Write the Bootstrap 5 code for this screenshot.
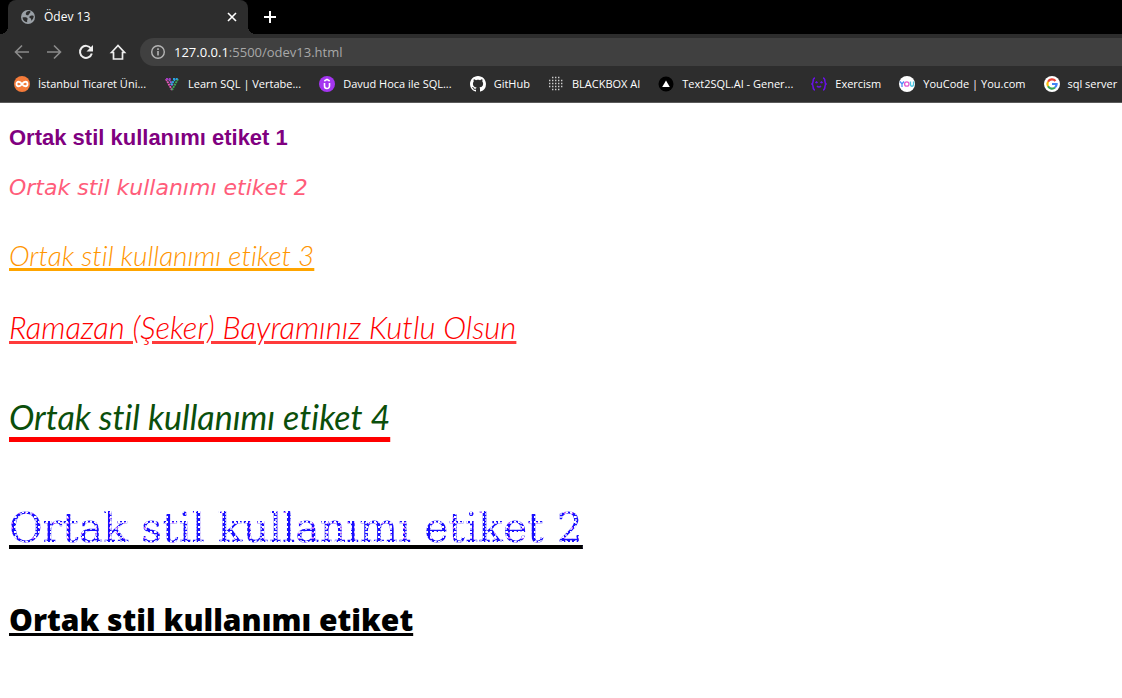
<!DOCTYPE html>
<html lang="tr">
<head>
<meta charset="utf-8">
<meta name="viewport" content="width=device-width, initial-scale=1">
<title>Ödev 13</title>
<link href="https://cdn.jsdelivr.net/npm/bootstrap@5.3.0/dist/css/bootstrap.min.css" rel="stylesheet">
<style>
  body { background: #fff; overflow-x: hidden; }
  svg { display: block; flex: none; }
  .browser { background: #2d2d2d; color: #fff; font: 12px/16px "Open Sans", sans-serif; border-bottom: 1px solid #5a5a5a; }
  .browser button { background: none; border: 0; padding: 0; color: inherit; }
  .tabs { background: #000; height: 34px; }
  .tab-current { position: relative; width: 240px; height: 34px; background: #2d2d2d; border-radius: 8px 8px 0 0; padding: 0 10px 0 12px; }
  .tab-current::before, .tab-current::after { content: ""; position: absolute; bottom: 0; width: 8px; height: 8px; }
  .tab-current::before { left: -8px; background: radial-gradient(circle at 0 0, #000 8px, #2d2d2d 8px); }
  .tab-current::after { right: -8px; background: radial-gradient(circle at 100% 0, #000 8px, #2d2d2d 8px); }
  .toolbar { height: 36px; padding-left: 12px; gap: 12px; }
  .browser .dim { color: #8b8b8b; }
  .address { height: 28px; padding-left: 10px; gap: 8px; background: #404040; border-radius: 14px 0 0 14px; font-size: 13px; color: #a8a8a8; }
  .address b { color: #fff; font-weight: 400; }
  .bookmarks { height: 32px; padding: 0 0 4px 14px; gap: 18px; overflow: hidden; }
  .bookmarks a { color: #fff; text-decoration: none; white-space: nowrap; flex: none; font-size: 11px; }
  .page-text { padding: 21px 9px; }
  .page-text > * { margin: 0; font-weight: 400; text-decoration-line: underline; font-variant-ligatures: none !important; }
  .page-text .purple-line { font: bold 22px/28px "Liberation Sans", sans-serif; color: purple; text-decoration: none; margin-bottom: 22px; }
  .page-text .pink-line { font: italic 22px/28px "DejaVu Sans", sans-serif; color: #ff5c7a; text-decoration: none; margin-bottom: 33px; }
  .page-text .orange-line { font: italic 300 28px/40px Lato, sans-serif; color: #ff9500; text-decoration-color: orange; text-decoration-thickness: 3px; text-underline-offset: 2px; margin-bottom: 32px; }
  .page-text .red-line { font: italic 300 31px/40px Lato, sans-serif; color: red; text-decoration-color: #ff3b3b; text-decoration-thickness: 3px; text-underline-offset: 2px; margin-bottom: 48px; }
  .page-text .green-line { font: italic 34px/44px Lato, sans-serif; color: #0b4f0b; text-decoration-color: red; text-decoration-thickness: 5px; text-underline-offset: 7px; margin-bottom: 61px; }
  .page-text .dotted-line { font: 41px/56px "DejaVu Serif", serif; color: transparent; background: radial-gradient(circle at 2px 2px, #fff 0 1px, transparent 1px) 0 0 / 4px 5px, radial-gradient(circle at 2px 2px, #ffffffb0 0 1px, transparent 1px) 0 0 / 5px 3px, radial-gradient(circle at 3px 3px, #c060ff 0 1px, transparent 1px) 0 0 / 7px 5px, linear-gradient(#1a10ff, #1a10ff); -webkit-background-clip: text; background-clip: text; text-decoration-color: #000; text-decoration-thickness: 4px; text-underline-offset: 3px; margin-bottom: 42px; }
  .page-text .black-line { font: 800 30px/44px "Open Sans", sans-serif; color: #000; text-decoration-thickness: 3px; text-underline-offset: 2px; }
</style>
</head>
<body>
<header class="browser">
  <div class="tabs d-flex ps-2">
    <div class="tab-current d-flex align-items-center">
      <svg width="16" height="16" viewBox="0 0 16 16"><circle cx="8" cy="8" r="7" fill="#9aa0a6"/><path d="M2.500 8.500c2-.6 4.500-.5 5 .8s-.8 1.700-.3 4C4.500 13 2.700 11 2.500 8.500zM6.500 3c1-1 3-1.200 4-.4.200 1.400-1 1.600-1.500 2.400S8.600 6.500 7 6.300 5.500 4 6.500 3zM9.500 7.500c1-1 2.500-1.200 4.200-.4 0 2-1 3.800-2.400 4.700-.3-1.300.2-2-.8-2.500S9 8.200 9.500 7.500z" fill="#2d2d2d"/></svg>
      <span class="ms-2 flex-grow-1">Ödev 13</span>
      <button type="button" aria-label="Kapat"><svg width="12" height="12" viewBox="0 0 12 12"><path d="M2 2l8 8M10 2l-8 8" stroke="#fff" stroke-width="1.600"/></svg></button>
    </div>
    <button type="button" class="ms-3" aria-label="Yeni sekme"><svg width="12" height="12" viewBox="0 0 12 12"><path d="M6 0v12M0 6h12" stroke="#fff" stroke-width="2"/></svg></button>
  </div>
  <div class="toolbar d-flex align-items-center">
    <button type="button" class="dim" aria-label="Geri"><svg width="20" height="20" viewBox="0 0 20 20" fill="none" stroke="currentColor" stroke-width="1.600"><path d="M17 10H4M10 3.500L3.500 10l6.500 6.500"/></svg></button>
    <button type="button" class="dim" aria-label="İleri"><svg width="20" height="20" viewBox="0 0 20 20" fill="none" stroke="currentColor" stroke-width="1.600"><path d="M3 10h13M10 3.500l6.500 6.500-6.500 6.500"/></svg></button>
    <button type="button" aria-label="Yenile"><svg width="20" height="20" viewBox="0 0 20 20"><path d="M15 6.500A6 6 0 1 0 15.800 11.500" fill="none" stroke="#eee" stroke-width="2"/><path d="M17 3v6.500h-6.500z" fill="#eee"/></svg></button>
    <button type="button" aria-label="Ana sayfa"><svg width="20" height="20" viewBox="0 0 20 20"><path d="M3.500 10.500L10 3.500l6.500 7H14.500V17h-9v-6.500z" fill="none" stroke="#eee" stroke-width="1.700"/></svg></button>
    <div class="address d-flex align-items-center flex-grow-1">
      <svg width="16" height="16" viewBox="0 0 16 16"><circle cx="8" cy="8" r="6.300" fill="none" stroke="#b5b5b5" stroke-width="1.400"/><path d="M8 7v4.500M8 4.300v1.600" stroke="#b5b5b5" stroke-width="1.600"/></svg>
      <span><b>127.0.0.1</b>:5500/odev13.html</span>
    </div>
  </div>
  <nav class="bookmarks d-flex align-items-center">
    <a href="#" class="d-flex align-items-center gap-2"><svg width="16" height="16" viewBox="0 0 16 16"><circle cx="8" cy="8" r="8" fill="#f47b3a"/><path d="M8 8C6 5 2.500 5 2.500 8S6 11 8 8s5.500-3 5.500 0S10 11 8 8z" fill="none" stroke="#fff" stroke-width="1.800"/></svg>İstanbul Ticaret Üni...</a>
    <a href="#" class="d-flex align-items-center gap-2"><svg width="16" height="16" viewBox="0 0 16 16" fill="none" stroke-width="2" stroke-dasharray="2 .7"><path d="M2 3l6 11" stroke="#e457b8"/><path d="M5 3l4 7" stroke="#9b5bd6"/><path d="M14 3L8 14" stroke="#3fa65a"/><path d="M11 3L7 9" stroke="#29b6e8"/><path d="M2 3h5" stroke="#a23cc0"/><path d="M9 3h5" stroke="#2aa0e0"/></svg>Learn SQL | Vertabe...</a>
    <a href="#" class="d-flex align-items-center gap-2"><svg width="16" height="16" viewBox="0 0 16 16"><circle cx="8" cy="8" r="8" fill="#a435f0"/><path d="M5.500 7v3a2.500 2.500 0 0 0 5 0V7M5.300 5L8 3.400 10.700 5" fill="none" stroke="#fff" stroke-width="1.600"/></svg>Davud Hoca ile SQL...</a>
    <a href="#" class="d-flex align-items-center gap-2"><svg width="16" height="16" viewBox="0 0 16 16" fill="#fff"><path d="M8 0C3.580 0 0 3.580 0 8c0 3.540 2.290 6.530 5.470 7.590.4.070.55-.17.55-.38 0-.19-.01-.82-.01-1.490-2.010.37-2.530-.49-2.690-.94-.09-.23-.48-.94-.82-1.130-.28-.15-.68-.52-.01-.53.63-.01 1.080.58 1.230.82.72 1.210 1.870.87 2.330.66.070-.52.28-.87.51-1.070-1.780-.2-3.640-.89-3.640-3.950 0-.87.31-1.590.82-2.150-.08-.2-.36-1.020.08-2.120 0 0 .67-.21 2.200.82.640-.18 1.320-.27 2-.27s1.360.09 2 .27c1.530-1.040 2.200-.82 2.200-.82.440 1.100.160 1.920.080 2.120.510.560.820 1.270.820 2.150 0 3.070-1.870 3.750-3.650 3.950.29.250.54.730.54 1.480 0 1.070-.01 1.930-.01 2.200 0 .210.150.460.550.380A8.010 8.010 0 0 0 16 8c0-4.420-3.580-8-8-8z"/></svg>GitHub</a>
    <a href="#" class="d-flex align-items-center gap-2"><svg width="16" height="16" viewBox="0 0 16 16" fill="none" stroke="#ccc" stroke-width="1.400" stroke-dasharray="1.400 1.600"><path d="M4 1.500h9M1 4.500h14M1 7.500h14M1 10.500h14M4 13.500h9"/></svg>BLACKBOX AI</a>
    <a href="#" class="d-flex align-items-center gap-2"><svg width="16" height="16" viewBox="0 0 16 16"><circle cx="8" cy="8" r="7.500" fill="#000"/><path d="M8 4.500l3.800 6.500H4.200z" fill="#fff"/></svg>Text2SQL.AI - Gener...</a>
    <a href="#" class="d-flex align-items-center gap-2"><svg width="16" height="16" viewBox="0 0 16 16" fill="none" stroke="#6a11e8" stroke-width="1.500"><path d="M4 2C1 2 3 7 1 8c2 1 0 6 3 6M12 2c3 0 1 5 3 6-2 1 0 6-3 6M4.500 7l1-1 1 1M9.500 7l1-1 1 1M6 10c1 1.200 3 1.200 4 0"/></svg>Exercism</a>
    <a href="#" class="d-flex align-items-center gap-2"><svg width="16" height="16" viewBox="0 0 16 16" fill="none" stroke-width="1.300"><circle cx="8" cy="8" r="8" fill="#fff"/><path d="M1 5.500l2 2.500 2-2.500M3 8v3" stroke="#4d8df5"/><circle cx="7.800" cy="8" r="2.200" stroke="#e45bd0"/><path d="M11.500 5.500V8c0 3 3 3 3 0V5.500" stroke="#4bc4e0"/></svg>YouCode | You.com</a>
    <a href="#" class="d-flex align-items-center gap-2"><svg width="16" height="16" viewBox="0 0 16 16" fill="none" stroke-width="2.200"><circle cx="8" cy="8" r="8" fill="#fff"/><path d="M11.500 5A4.600 4.600 0 0 0 4 5.700" stroke="#ea4335"/><path d="M4 5.700a4.600 4.600 0 0 0 0 4.600" stroke="#fbbc05"/><path d="M4 10.300a4.600 4.600 0 0 0 7 1.200" stroke="#34a853"/><path d="M8 8h4.600a4.600 4.600 0 0 1-1.600 3.500" stroke="#4285f4"/></svg>sql server</a>
  </nav>
</header>
<main class="page-text d-flex flex-column align-items-start">
  <h1 class="purple-line">Ortak stil kullanımı etiket 1</h1>
  <p class="pink-line">Ortak stil kullanımı etiket 2</p>
  <p class="orange-line">Ortak stil kullanımı etiket 3</p>
  <p class="red-line">Ramazan (Şeker) Bayramınız Kutlu Olsun</p>
  <p class="green-line">Ortak stil kullanımı etiket 4</p>
  <p class="dotted-line">Ortak stil kullanımı etiket 2</p>
  <p class="black-line">Ortak stil kullanımı etiket</p>
</main>
<script src="https://cdn.jsdelivr.net/npm/bootstrap@5.3.0/dist/js/bootstrap.bundle.min.js"></script>
</body>
</html>
